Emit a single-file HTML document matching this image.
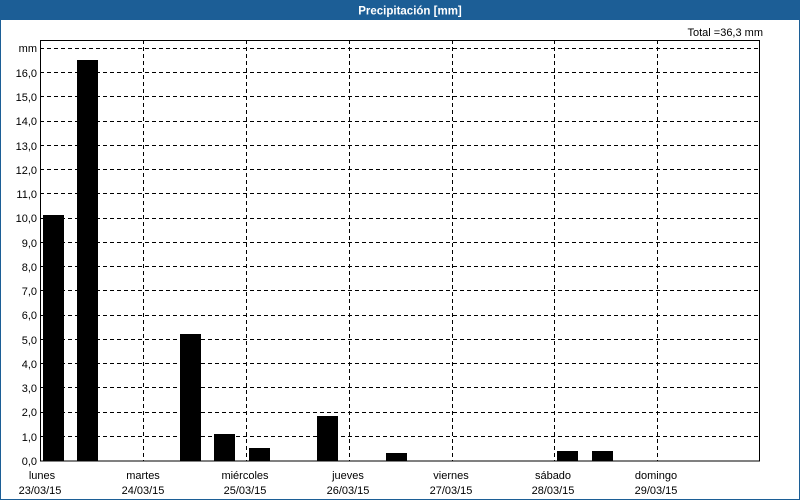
<!DOCTYPE html>
<html><head><meta charset="utf-8"><style>
html,body{margin:0;padding:0;width:800px;height:500px;overflow:hidden;background:#fff}
svg text{font-family:"Liberation Sans",sans-serif;font-size:11px;fill:#000}
</style></head><body>
<svg width="800" height="500" xmlns="http://www.w3.org/2000/svg">
<rect x="0" y="0" width="800" height="500" fill="#fff"/>
<rect x="0" y="0" width="800" height="20" fill="#1c5e96"/>
<rect x="0.5" y="0.5" width="799" height="499" fill="none" stroke="#1c5e96"/>
<text x="410" y="14.5" text-anchor="middle" style="font-weight:bold;fill:#fff;font-size:11.5px">Precipitación [mm]</text>
<text x="763" y="36" text-anchor="end">Total =36,3 mm</text>
<g stroke="#000" stroke-width="1" stroke-dasharray="4,3" fill="none">
<path d="M40 48.5H760M40 72.5H760M40 96.5H760M40 121.5H760M40 145.5H760M40 169.5H760M40 193.5H760M40 218.5H760M40 242.5H760M40 266.5H760M40 290.5H760M40 315.5H760M40 339.5H760M40 363.5H760M40 387.5H760M40 412.5H760M40 436.5H760"/>
<path d="M143.5 40V461M246.5 40V461M349.5 40V461M452.5 40V461M554.5 40V461M657.5 40V461"/>
</g>
<rect x="40.5" y="40.5" width="719" height="420.5" fill="none" stroke="#000"/>
<g fill="#000">
<rect x="43" y="215" width="21" height="246"/>
<rect x="77" y="60" width="21" height="401"/>
<rect x="180" y="334" width="21" height="127"/>
<rect x="214" y="434" width="21" height="27"/>
<rect x="249" y="448" width="21" height="13"/>
<rect x="317" y="416" width="21" height="45"/>
<rect x="386" y="453" width="21" height="8"/>
<rect x="557" y="451" width="21" height="10"/>
<rect x="592" y="451" width="21" height="10"/>
</g>
<g text-anchor="end">
<text x="37" y="52">mm</text>
<text x="37" y="77">16,0</text><text x="37" y="101">15,0</text><text x="37" y="125">14,0</text>
<text x="37" y="150">13,0</text><text x="37" y="174">12,0</text><text x="37" y="198">11,0</text>
<text x="37" y="222">10,0</text><text x="37" y="247">9,0</text><text x="37" y="271">8,0</text>
<text x="37" y="295">7,0</text><text x="37" y="319">6,0</text><text x="37" y="344">5,0</text>
<text x="37" y="368">4,0</text><text x="37" y="392">3,0</text><text x="37" y="416">2,0</text>
<text x="37" y="441">1,0</text><text x="37" y="465">0,0</text>
</g>
<g text-anchor="middle">
<text x="42" y="479">lunes</text><text x="40" y="494">23/03/15</text>
<text x="143" y="479">martes</text><text x="143" y="494">24/03/15</text>
<text x="245" y="479">miércoles</text><text x="245" y="494">25/03/15</text>
<text x="348" y="479">jueves</text><text x="348" y="494">26/03/15</text>
<text x="451" y="479">viernes</text><text x="451" y="494">27/03/15</text>
<text x="553" y="479">sábado</text><text x="553" y="494">28/03/15</text>
<text x="656" y="479">domingo</text><text x="656" y="494">29/03/15</text>
</g>
</svg>
</body></html>
